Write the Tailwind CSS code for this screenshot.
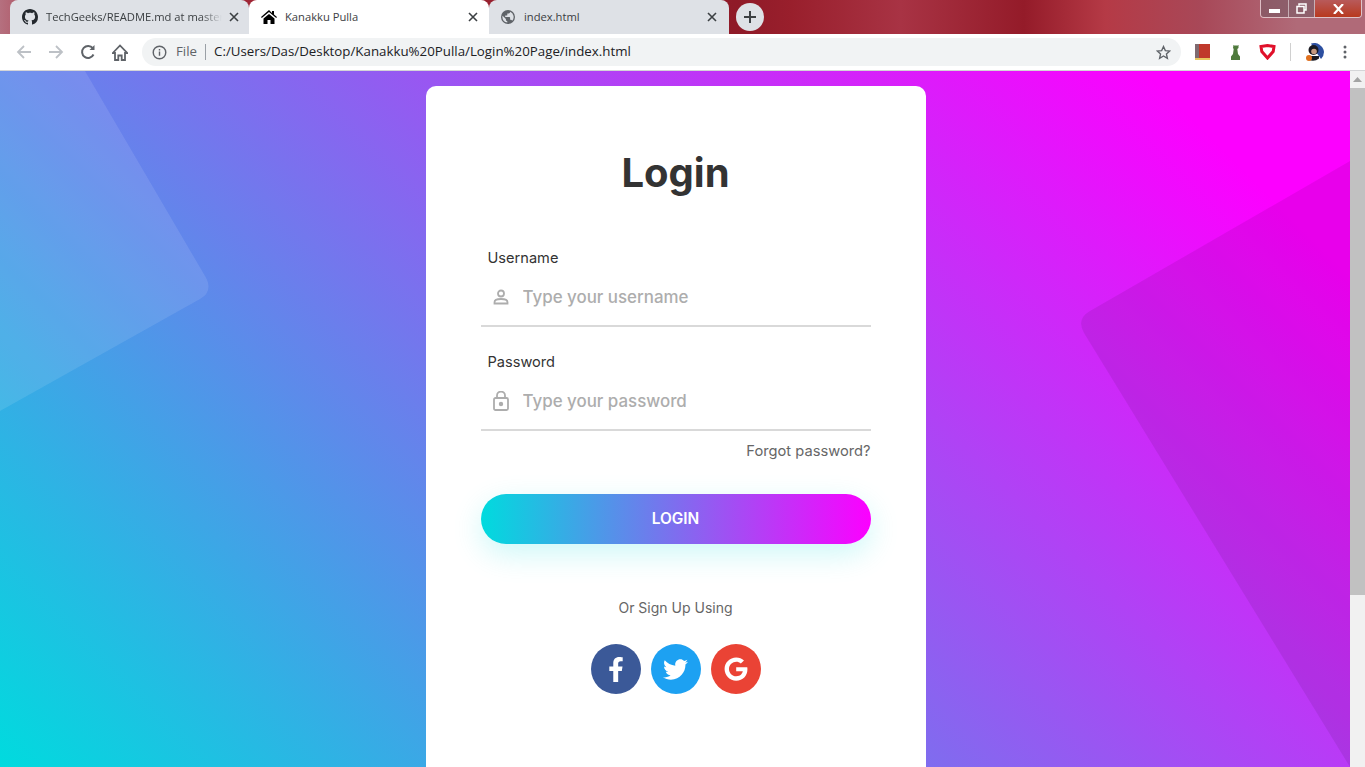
<!DOCTYPE html>
<html lang="en">
<head>
  <meta charset="UTF-8">
  <meta name="viewport" content="width=device-width, initial-scale=1.0">
  <title>Kanakku Pulla</title>
  <script src="https://cdn.jsdelivr.net/npm/@tailwindcss/browser@4"></script>
</head>
<body class="h-[767px] w-[1365px] overflow-hidden bg-white font-['Inter',sans-serif]">

  <!-- browser tabs -->
  <div class="relative flex h-[34px] bg-[linear-gradient(90deg,#b5707f_0%,#a52a3a_5%,#8f1a28_54%,#991f2c_58%,#a83344_66%,#941b29_75%,#b53a46_81%,#a84858_88%,#b06a78_95%)] pl-[10px] font-['Open_Sans',sans-serif] text-[11.200px] text-[#3c4043]">
    <div class="flex w-[239px] items-center rounded-t-lg bg-[#dee1e6] pr-[10px] pl-[12px]">
      <svg class="h-[16px] w-[16px] shrink-0 text-[#24292e]" viewBox="0 0 16 16" fill="currentColor"><path d="M8 0C3.58 0 0 3.58 0 8c0 3.54 2.29 6.53 5.47 7.59.4.07.55-.17.55-.38 0-.19-.01-.82-.01-1.49-2.01.37-2.53-.49-2.69-.94-.09-.23-.48-.94-.82-1.13-.28-.15-.68-.52-.01-.53.63-.01 1.08.58 1.23.82.72 1.21 1.87.87 2.33.66.07-.52.28-.87.51-1.07-1.78-.2-3.64-.89-3.64-3.95 0-.87.31-1.59.82-2.15-.08-.2-.36-1.02.08-2.12 0 0 .67-.21 2.2.82.64-.18 1.32-.27 2-.27.68 0 1.36.09 2 .27 1.53-1.04 2.2-.82 2.2-.82.44 1.1.16 1.92.08 2.12.51.56.82 1.27.82 2.15 0 3.07-1.87 3.75-3.65 3.95.29.25.54.73.54 1.48 0 1.07-.01 1.93-.01 2.2 0 .21.15.46.55.38A8.013 8.013 0 0016 8c0-4.42-3.58-8-8-8z"/></svg>
      <span class="ml-[8px] w-[176px] overflow-hidden whitespace-nowrap [mask-image:linear-gradient(90deg,#000_88%,transparent)]">TechGeeks/README.md at master</span>
      <svg class="ml-auto h-[10px] w-[10px] text-[#3c4043]" viewBox="0 0 10 10" stroke="currentColor" stroke-width="1.6"><path d="M1 1l8 8M9 1l-8 8"/></svg>
    </div>
    <div class="flex w-[240px] items-center rounded-t-lg bg-white pr-[11px] pl-[12px]">
      <svg class="h-[16px] w-[16px] shrink-0 text-black" viewBox="0 0 16 14" fill="currentColor"><path d="M8 0L0 7l.8 1L8 2l7.2 6 .8-1-3-2.600V1h-2v2zM2.500 8.500V14H6.500V10h3v4h4V8.500L8 4z"/></svg>
      <span class="ml-[8px] whitespace-nowrap">Kanakku Pulla</span>
      <svg class="ml-auto h-[10px] w-[10px] text-[#3c4043]" viewBox="0 0 10 10" stroke="currentColor" stroke-width="1.6"><path d="M1 1l8 8M9 1l-8 8"/></svg>
    </div>
    <div class="flex w-[240px] items-center rounded-t-lg bg-[#dee1e6] pr-[12px] pl-[12px]">
      <svg class="h-[14px] w-[14px] shrink-0 text-[#5f6368]" viewBox="0 0 24 24" fill="currentColor"><path d="M12 0a12 12 0 100 24 12 12 0 000-24zm-1.200 21.500A9.600 9.600 0 012.400 12c0-.8.100-1.500.300-2.100L8.400 15.600v1.200a2.400 2.400 0 002.400 2.400zm8.300-3a2.400 2.400 0 00-2.300-1.700h-1.200v-3.600a1.200 1.200 0 00-1.200-1.200H7.200V9.600h2.400a1.200 1.200 0 001.200-1.200V6h2.400a2.400 2.400 0 002.400-2.400v-.5a9.600 9.600 0 013.500 15.400z"/></svg>
      <span class="ml-[9px] whitespace-nowrap">index.html</span>
      <svg class="ml-auto h-[10px] w-[10px] text-[#3c4043]" viewBox="0 0 10 10" stroke="currentColor" stroke-width="1.6"><path d="M1 1l8 8M9 1l-8 8"/></svg>
    </div>
    <div class="mt-[3px] ml-[7px] flex h-[28px] w-[28px] items-center justify-center rounded-full bg-[#dee1e6]">
      <svg class="h-[12px] w-[12px] text-[#3c4043]" viewBox="0 0 12 12" stroke="currentColor" stroke-width="2"><path d="M6 0v12M0 6h12"/></svg>
    </div>

    <!-- window buttons -->
    <div class="absolute top-0 right-[3px] flex h-[18px] w-[102px] overflow-hidden rounded-b-[4px] border border-t-0 border-white/60">
      <div class="flex w-[28px] items-end justify-center border-r border-white/50 bg-[#6b5560]/50 pb-[4px]"><div class="h-[4px] w-[11px] bg-white"></div></div>
      <div class="flex w-[26px] items-center justify-center border-r border-white/50 bg-[#6b5560]/50">
        <svg class="h-[11px] w-[11px]" viewBox="0 0 11 11" fill="none" stroke="#fff" stroke-width="1.500"><path d="M3 2.500V1h7v6H8.500M1 3.500h7v6.500H1z"/></svg>
      </div>
      <div class="flex flex-1 items-center justify-center bg-[linear-gradient(#b85a5a,#b8391f)]">
        <svg class="h-[10px] w-[11px]" viewBox="0 0 11 10" stroke="#fff" stroke-width="2.200"><path d="M1 0l9 10M10 0L1 10"/></svg>
      </div>
    </div>
  </div>

  <!-- address bar -->
  <div class="flex h-[37px] items-center border-b border-[#d4d5d7] bg-white pl-[16px] font-['Open_Sans',sans-serif]">
    <svg class="h-[16px] w-[16px] text-[#bdc1c6]" viewBox="0 0 16 16" fill="none" stroke="currentColor" stroke-width="1.800"><path d="M15 8H2M8 2L2 8l6 6"/></svg>
    <svg class="ml-[16px] h-[16px] w-[16px] text-[#bdc1c6]" viewBox="0 0 16 16" fill="none" stroke="currentColor" stroke-width="1.800"><path d="M1 8h13M8 2l6 6-6 6"/></svg>
    <svg class="ml-[16px] h-[16px] w-[16px] text-[#5f6368]" viewBox="0 0 16 16" fill="none" stroke="currentColor" stroke-width="2"><path d="M13.500 10.500A6 6 0 1112.800 4.200"/><path d="M14.500 1v5h-5" fill="currentColor" stroke="none"/></svg>
    <svg class="ml-[16px] h-[17px] w-[16px] text-[#5f6368]" viewBox="0 0 16 17" fill="none" stroke="currentColor" stroke-width="1.800"><path d="M.8 9L8 1.500 15.200 9H13v7H9.700v-4.500H6.300V16H3V9z"/></svg>
    <div class="ml-[14px] flex h-[28px] w-[1039px] items-center rounded-full bg-[#f1f3f4] pr-[10px] pl-[10px] text-[13.300px] text-[#202124]">
      <svg class="h-[15px] w-[15px] shrink-0 text-[#5f6368]" viewBox="0 0 16 16" fill="none" stroke="currentColor" stroke-width="1.500"><circle cx="8" cy="8" r="6.700"/><path d="M8 7v4.500M8 4.200v1.600"/></svg>
      <span class="ml-[9px] text-[#5f6368]">File</span>
      <div class="mx-[8px] h-[16px] w-px bg-[#9aa0a6]"></div>
      <span class="whitespace-nowrap">C:/Users/Das/Desktop/Kanakku%20Pulla/Login%20Page/index.html</span>
      <svg class="ml-auto h-[15px] w-[15px] text-[#5f6368]" viewBox="0 0 24 24" fill="none" stroke="currentColor" stroke-width="2.200"><path d="M12 2.500l2.900 6.400 7 .7-5.200 4.700 1.500 6.900-6.200-3.600-6.200 3.600 1.500-6.900-5.200-4.700 7-.7z"/></svg>
    </div>
    <!-- extensions -->
    <svg class="ml-[14px] h-[16px] w-[15px]" viewBox="0 0 15 16"><rect width="15" height="14" fill="#c0392b"/><rect width="4" height="14" fill="#7f6a70"/><rect y="14" width="15" height="2" fill="#e8c860"/></svg>
    <svg class="ml-[20px] h-[16px] w-[12px] text-[#4f7a3d]" viewBox="0 0 12 16" fill="currentColor"><path d="M3.500 1h1v1h1V1h1v1h1V1h1v3l-1.200 1L8 10l2 2.500V16H1v-3.500L3 10l.7-5L3 4z"/></svg>
    <svg class="ml-[17px] h-[16px] w-[17px]" viewBox="0 0 17 16" fill="none" stroke="#e0102a" stroke-width="3"><path d="M2 2.500L8.500 1.500l6.500 1-.8 5L8.500 14 2.800 7.500z"/></svg>
    <div class="ml-[14px] h-[18px] w-px bg-[#d0d0d0]"></div>
    <svg class="ml-[13px] h-[20px] w-[20px]" viewBox="0 0 20 20">
      <circle cx="10" cy="10" r="10" fill="#fff"/>
      <path d="M7 1.500A10 10 0 0120 10a10 10 0 01-3 7L12 10z" fill="#2c4fa0"/>
      <circle cx="9.500" cy="8" r="5" fill="#1a1a22"/>
      <circle cx="10" cy="9.500" r="2.800" fill="#c79a80"/>
      <path d="M5 14h10v2.500A10 10 0 015 18z" fill="#1a1a22"/>
      <circle cx="5" cy="16" r="3" fill="#e0701e"/>
    </svg>
    <svg class="ml-[19px] h-[14px] w-[4px] text-[#5f6368]" viewBox="0 0 4 14" fill="currentColor"><circle cx="2" cy="2" r="1.500"/><circle cx="2" cy="7" r="1.500"/><circle cx="2" cy="12" r="1.500"/></svg>
  </div>

  <!-- page -->
  <div class="flex h-[696px]">
    <main class="relative h-[696px] w-[1350px] overflow-hidden bg-[linear-gradient(45deg,#00dbde,#fc00ff_90%)] pt-[15px] pl-[1px]">
      <!-- background shapes -->
      <svg class="absolute top-0 left-0" width="1350" height="696" viewBox="0 0 1350 696">
        <path d="M0 0H85L205 205Q214 220 200 228L0 340Z" fill="#fff" fill-opacity="0.1"/>
        <path d="M1350 90L1090 240Q1076 248 1084 262L1350 696Z" fill="#000" fill-opacity="0.08"/>
      </svg>

      <!-- login card -->
      <div class="relative mx-auto h-[700px] w-[500px] rounded-[10px] bg-white px-[55px] pt-[63px]">
        <h1 class="text-center text-[40px] leading-[48px] font-bold text-[#333]">Login</h1>

        <form class="mt-[50px]">
          <div class="border-b-2 border-[#d9d9d9]">
            <label for="username" class="block pl-[7px] text-[14.600px] leading-[22px] text-[#333]">Username</label>
            <div class="flex h-[56px] items-center pl-[12px]">
              <svg class="h-[16px] w-[16px] text-[#adadad]" viewBox="0 0 16 16" fill="none" stroke="currentColor" stroke-width="1.800"><circle cx="8" cy="4.500" r="3"/><path d="M1.500 14.500v-1.200c0-2 3-3.300 6.500-3.300s6.500 1.300 6.500 3.300v1.200z"/></svg>
              <input id="username" type="text" placeholder="Type your username" class="mt-[2px] ml-[14px] w-[320px] text-[16.900px] font-medium outline-none placeholder:text-[#adadad]">
            </div>
          </div>

          <div class="mt-[24px] border-b-2 border-[#d9d9d9]">
            <label for="password" class="block pl-[7px] text-[14.600px] leading-[22px] text-[#333]">Password</label>
            <div class="flex h-[56px] items-center pl-[12px]">
              <svg class="h-[20px] w-[16px] text-[#adadad]" viewBox="0 0 16 20" fill="none" stroke="currentColor" stroke-width="1.800"><rect x="1" y="7" width="14" height="12" rx="1.500"/><path d="M4 7V4.500a4 4 0 018 0V7"/><circle cx="8" cy="13" r="1.300" fill="currentColor"/></svg>
              <input id="password" type="password" placeholder="Type your password" class="mt-[2px] ml-[14px] w-[320px] text-[16.900px] font-medium outline-none placeholder:text-[#adadad]">
            </div>
          </div>

          <div class="mt-[9px] text-right text-[14.700px] leading-[22px] text-[#666]">Forgot password?</div>

          <button type="button" class="mt-[32px] h-[50px] w-full rounded-full bg-[linear-gradient(90deg,#00dbde,#fc00ff)] text-[15.400px] font-semibold text-white shadow-[0_10px_30px_0_rgba(0,219,222,0.2)]">LOGIN</button>
        </form>

        <p class="mt-[53px] text-center text-[14px] leading-[22px] text-[#666]">Or Sign Up Using</p>

        <div class="mt-[25px] flex justify-center gap-[10px]">
          <div class="flex h-[50px] w-[50px] items-center justify-center rounded-full bg-[#3b5998]">
            <svg class="h-[25px] w-[16px]" viewBox="0 0 320 512" fill="#fff"><path d="M279.14 288l14.22-92.66h-88.91v-60.13c0-25.35 12.42-50.06 52.24-50.06h40.42V6.26S260.43 0 225.36 0c-73.22 0-121.08 44.38-121.08 124.72v70.62H22.89V288h81.39v224h100.17V288z"/></svg>
          </div>
          <div class="flex h-[50px] w-[50px] items-center justify-center rounded-full bg-[#1da1f2]">
            <svg class="h-[25px] w-[25px]" viewBox="0 0 512 512" fill="#fff"><path d="M459.37 151.716c.325 4.548.325 9.097.325 13.645 0 138.72-105.583 298.558-298.558 298.558-59.452 0-114.68-17.219-161.137-47.106 8.447.974 16.568 1.299 25.34 1.299 49.055 0 94.213-16.568 130.274-44.832-46.132-.975-84.792-31.188-98.112-72.772 6.498.974 12.995 1.624 19.818 1.624 9.421 0 18.843-1.3 27.614-3.573-48.081-9.747-84.143-51.98-84.143-102.985v-1.299c13.969 7.797 30.214 12.67 47.431 13.319-28.264-18.843-46.781-51.005-46.781-87.391 0-19.492 5.197-37.36 14.294-52.954 51.655 63.675 129.3 105.258 216.365 109.807-1.624-7.797-2.599-15.918-2.599-24.04 0-57.828 46.782-104.934 104.934-104.934 30.213 0 57.502 12.67 76.67 33.137 23.715-4.548 46.456-13.32 66.599-25.34-7.798 24.366-24.366 44.833-46.132 57.827 21.117-2.273 41.584-8.122 60.426-16.243-14.292 20.791-32.161 39.308-52.628 54.253z"/></svg>
          </div>
          <div class="flex h-[50px] w-[50px] items-center justify-center rounded-full bg-[#ea4335]">
            <svg class="h-[24px] w-[24px]" viewBox="0 0 488 512" fill="#fff"><path d="M488 261.8C488 403.3 391.1 504 248 504 110.8 504 0 393.2 0 256S110.8 8 248 8c66.8 0 123 24.5 166.3 64.9l-67.5 64.9C258.5 52.6 94.3 116.6 94.3 256c0 86.5 69.1 156.6 153.7 156.6 98.2 0 135-70.4 140.8-106.9H248v-85.3h236.1c2.3 12.7 3.9 24.9 3.9 41.4z"/></svg>
          </div>
        </div>
      </div>
    </main>

    <!-- scrollbar -->
    <div class="flex h-[696px] w-[15px] flex-col bg-[#f1f1f1]">
      <svg class="mx-auto mt-[6px] h-[5px] w-[9px] text-[#a3a3a3]" viewBox="0 0 9 5" fill="currentColor"><path d="M4.500 0L9 5H0z"/></svg>
      <div class="mt-[6px] h-[507px] bg-[#c1c1c1]"></div>
    </div>
  </div>
</body>
</html>
